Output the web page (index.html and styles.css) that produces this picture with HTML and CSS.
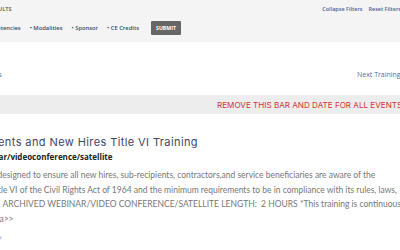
FILE: index.html
```html
<!DOCTYPE html>
<html lang="en">
<head>
  <meta charset="UTF-8">
  <title>Training Calendar</title>
  <link rel="stylesheet" href="styles.css">
</head>
<body>

  <!-- Filter bar -->
  <div class="filters">
    <div class="filters-top">
      <span class="filters-title">Filter Results</span>
      <div class="filters-links">
        <a href="#">Collapse Filters</a>
        <a href="#">Reset Filters</a>
      </div>
    </div>
    <div class="filters-row">
      <span class="filter first">Competencies</span>
      <span class="filter">&bull; Modalities</span>
      <span class="filter">&bull; Sponsor</span>
      <span class="filter">&bull; CE Credits</span>
      <button class="submit-btn">SUBMIT</button>
    </div>
  </div>

  <!-- Pager -->
  <div class="pager">
    <a href="#" class="prev">Previous Trainings</a>
    <a href="#" class="next">Next Trainings</a>
  </div>

  <!-- Date bar -->
  <div class="notice">REMOVE THIS BAR AND DATE FOR ALL EVENTS</div>

  <!-- Event -->
  <div class="event">
    <h2 class="event-title">Sub-Recipients and New Hires Title VI Training</h2>
    <div class="event-type">Archived Webinar/videoconference/satellite</div>
    <p class="event-desc">This training is designed to ensure all new hires, sub-recipients, contractors,and service beneficiaries are aware of the<br>provisions of Title VI of the Civil Rights Act of 1964 and the minimum requirements to be in compliance with its rules, laws,<br>and regulations. ARCHIVED WEBINAR/VIDEO CONFERENCE/SATELLITE LENGTH:&nbsp; 2 HOURS *This training is continuous<br><a href="#">View the agenda&gt;&gt;</a></p>
    <div class="event-more">&rsaquo;</div>
  </div>

</body>
</html>
```

FILE: styles.css
```css
body {
  margin: 0;
  padding: 0;
  font-family: "Open Sans", sans-serif;
  background: #ffffff;
  overflow: hidden;
  width: 400px;
  height: 250px;
}

a {
  text-decoration: none;
}

.filters {
  background: #f4f4f4;
  height: 42px;
  box-sizing: border-box;
  padding-top: 4px;
}

.filters-top {
  display: flex;
  justify-content: space-between;
  align-items: center;
  height: 9px;
  white-space: nowrap;
}

.filters-title {
  font-size: 5.5px;
  font-weight: 700;
  text-transform: uppercase;
  color: #777;
  margin-left: -31px;
}

.filters-links {
  display: flex;
  gap: 6px;
  margin-right: -1px;
}

.filters-links a {
  font-size: 5.5px;
  font-weight: 600;
  color: #4d5e93;
}

.filters-row {
  display: flex;
  align-items: center;
  margin-top: 8px;
  white-space: nowrap;
}

.filter {
  font-size: 5.8px;
  font-weight: 600;
  color: #3b4a6b;
  margin-right: 9px;
}

.filter.first {
  margin-left: -19px;
}

.submit-btn {
  margin-left: 3px;
  height: 14px;
  padding: 0 5px;
  border: none;
  border-radius: 1px;
  background: #666666;
  color: #ffffff;
  font-family: "Open Sans", sans-serif;
  font-size: 5.2px;
  font-weight: 700;
}

.pager {
  display: flex;
  justify-content: space-between;
  align-items: center;
  height: 53px;
  padding-top: 12px;
  box-sizing: border-box;
  white-space: nowrap;
}

.pager a {
  font-size: 7px;
  color: #5b6b9b;
}

.pager .prev {
  margin-left: -58px;
}

.pager .next {
  margin-right: -4px;
}

.notice {
  background: #ededed;
  height: 19px;
  line-height: 20px;
  padding-left: 217px;
  white-space: nowrap;
  font-family: Inter, sans-serif;
  font-size: 8.1px;
  color: #d0343c;
}

.event {
  padding-top: 20px;
  white-space: nowrap;
}

.event-title {
  margin: 0 0 0 -63px;
  font-family: Inter, sans-serif;
  font-size: 11px;
  font-weight: 400;
  letter-spacing: 0.4px;
  line-height: 16px;
  color: #3a4866;
}

.event-type {
  margin-left: -64px;
  font-size: 8px;
  font-weight: 700;
  line-height: 14px;
  color: #222;
}

.event-desc {
  margin: 4px 0 0 -58.5px;
  font-family: Lato, sans-serif;
  font-size: 8.5px;
  line-height: 14.6px;
  color: #777;
}

.event-desc a {
  color: #777;
}

.event-more {
  margin: 4px 0 0 -1px;
  font-size: 9px;
  line-height: 14px;
  color: #9aa3bb;
}
```
